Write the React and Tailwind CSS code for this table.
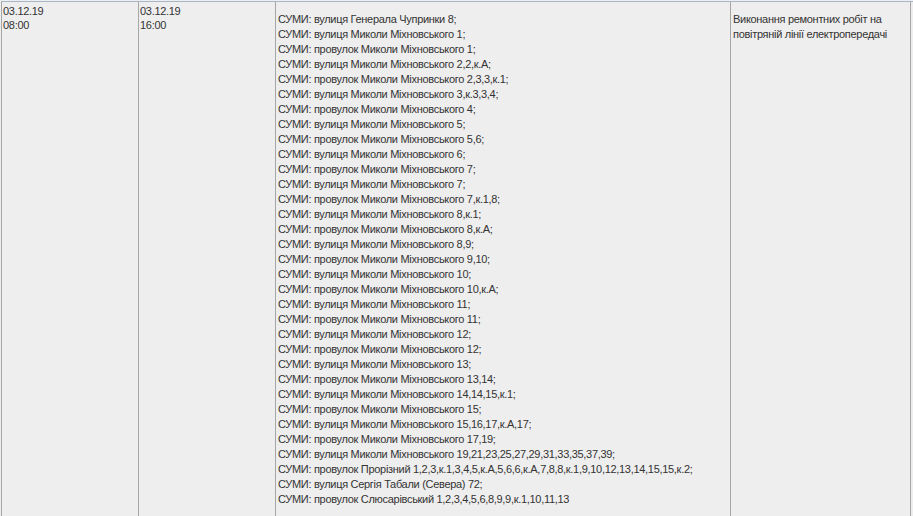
const ADDRESSES = [
  'СУМИ: вулиця Генерала Чупринки 8;',
  'СУМИ: вулиця Миколи Міхновського 1;',
  'СУМИ: провулок Миколи Міхновського 1;',
  'СУМИ: вулиця Миколи Міхновського 2,2,к.А;',
  'СУМИ: провулок Миколи Міхновського 2,3,3,к.1;',
  'СУМИ: вулиця Миколи Міхновського 3,к.3,3,4;',
  'СУМИ: провулок Миколи Міхновського 4;',
  'СУМИ: вулиця Миколи Міхновського 5;',
  'СУМИ: провулок Миколи Міхновського 5,6;',
  'СУМИ: вулиця Миколи Міхновського 6;',
  'СУМИ: провулок Миколи Міхновського 7;',
  'СУМИ: вулиця Миколи Міхновського 7;',
  'СУМИ: провулок Миколи Міхновського 7,к.1,8;',
  'СУМИ: вулиця Миколи Міхновського 8,к.1;',
  'СУМИ: провулок Миколи Міхновського 8,к.А;',
  'СУМИ: вулиця Миколи Міхновського 8,9;',
  'СУМИ: провулок Миколи Міхновського 9,10;',
  'СУМИ: вулиця Миколи Міхновського 10;',
  'СУМИ: провулок Миколи Міхновського 10,к.А;',
  'СУМИ: вулиця Миколи Міхновського 11;',
  'СУМИ: провулок Миколи Міхновського 11;',
  'СУМИ: вулиця Миколи Міхновського 12;',
  'СУМИ: провулок Миколи Міхновського 12;',
  'СУМИ: вулиця Миколи Міхновського 13;',
  'СУМИ: провулок Миколи Міхновського 13,14;',
  'СУМИ: вулиця Миколи Міхновського 14,14,15,к.1;',
  'СУМИ: провулок Миколи Міхновського 15;',
  'СУМИ: вулиця Миколи Міхновського 15,16,17,к.А,17;',
  'СУМИ: провулок Миколи Міхновського 17,19;',
  'СУМИ: вулиця Миколи Міхновського 19,21,23,25,27,29,31,33,35,37,39;',
  'СУМИ: провулок Прорізний 1,2,3,к.1,3,4,5,к.А,5,6,6,к.А,7,8,8,к.1,9,10,12,13,14,15,15,к.2;',
  'СУМИ: вулиця Сергія Табали (Севера) 72;',
  'СУМИ: провулок Слюсарівський 1,2,3,4,5,6,8,9,9,к.1,10,11,13',
]

export default function App() {
  return (
    <div className="w-[913px] h-[516px] overflow-hidden bg-[#eeeeee] pt-px font-['Liberation_Sans',Arial,sans-serif] text-[11px] tracking-[-0.3px] text-[#333333]">
      <div className="flex ml-px border-t border-[#a8b6c9] h-[600px]">
        {/* start */}
        <div className="w-[137px] border-l border-[#a6a6a6] pl-px pt-[2px] leading-[14px]">
          <div>03.12.19</div>
          <div>08:00</div>
        </div>
        {/* end */}
        <div className="w-[137px] border-l border-[#a6a6a6] pl-px pt-[2px] leading-[14px]">
          <div>03.12.19</div>
          <div>16:00</div>
        </div>
        {/* addresses */}
        <div className="w-[455px] border-l border-[#a6a6a6] pl-[2px] pt-[10px] leading-[15px]">
          {ADDRESSES.map((a, i) => (
            <div key={i} className="whitespace-nowrap">{a}</div>
          ))}
        </div>
        {/* reason */}
        <div className="w-[181px] border-l border-r border-[#a6a6a6] pl-[2px] pt-[10px] leading-[15px]">
          Виконання ремонтних робіт на повітряній лінії електропередачі
        </div>
      </div>
    </div>
  )
}
